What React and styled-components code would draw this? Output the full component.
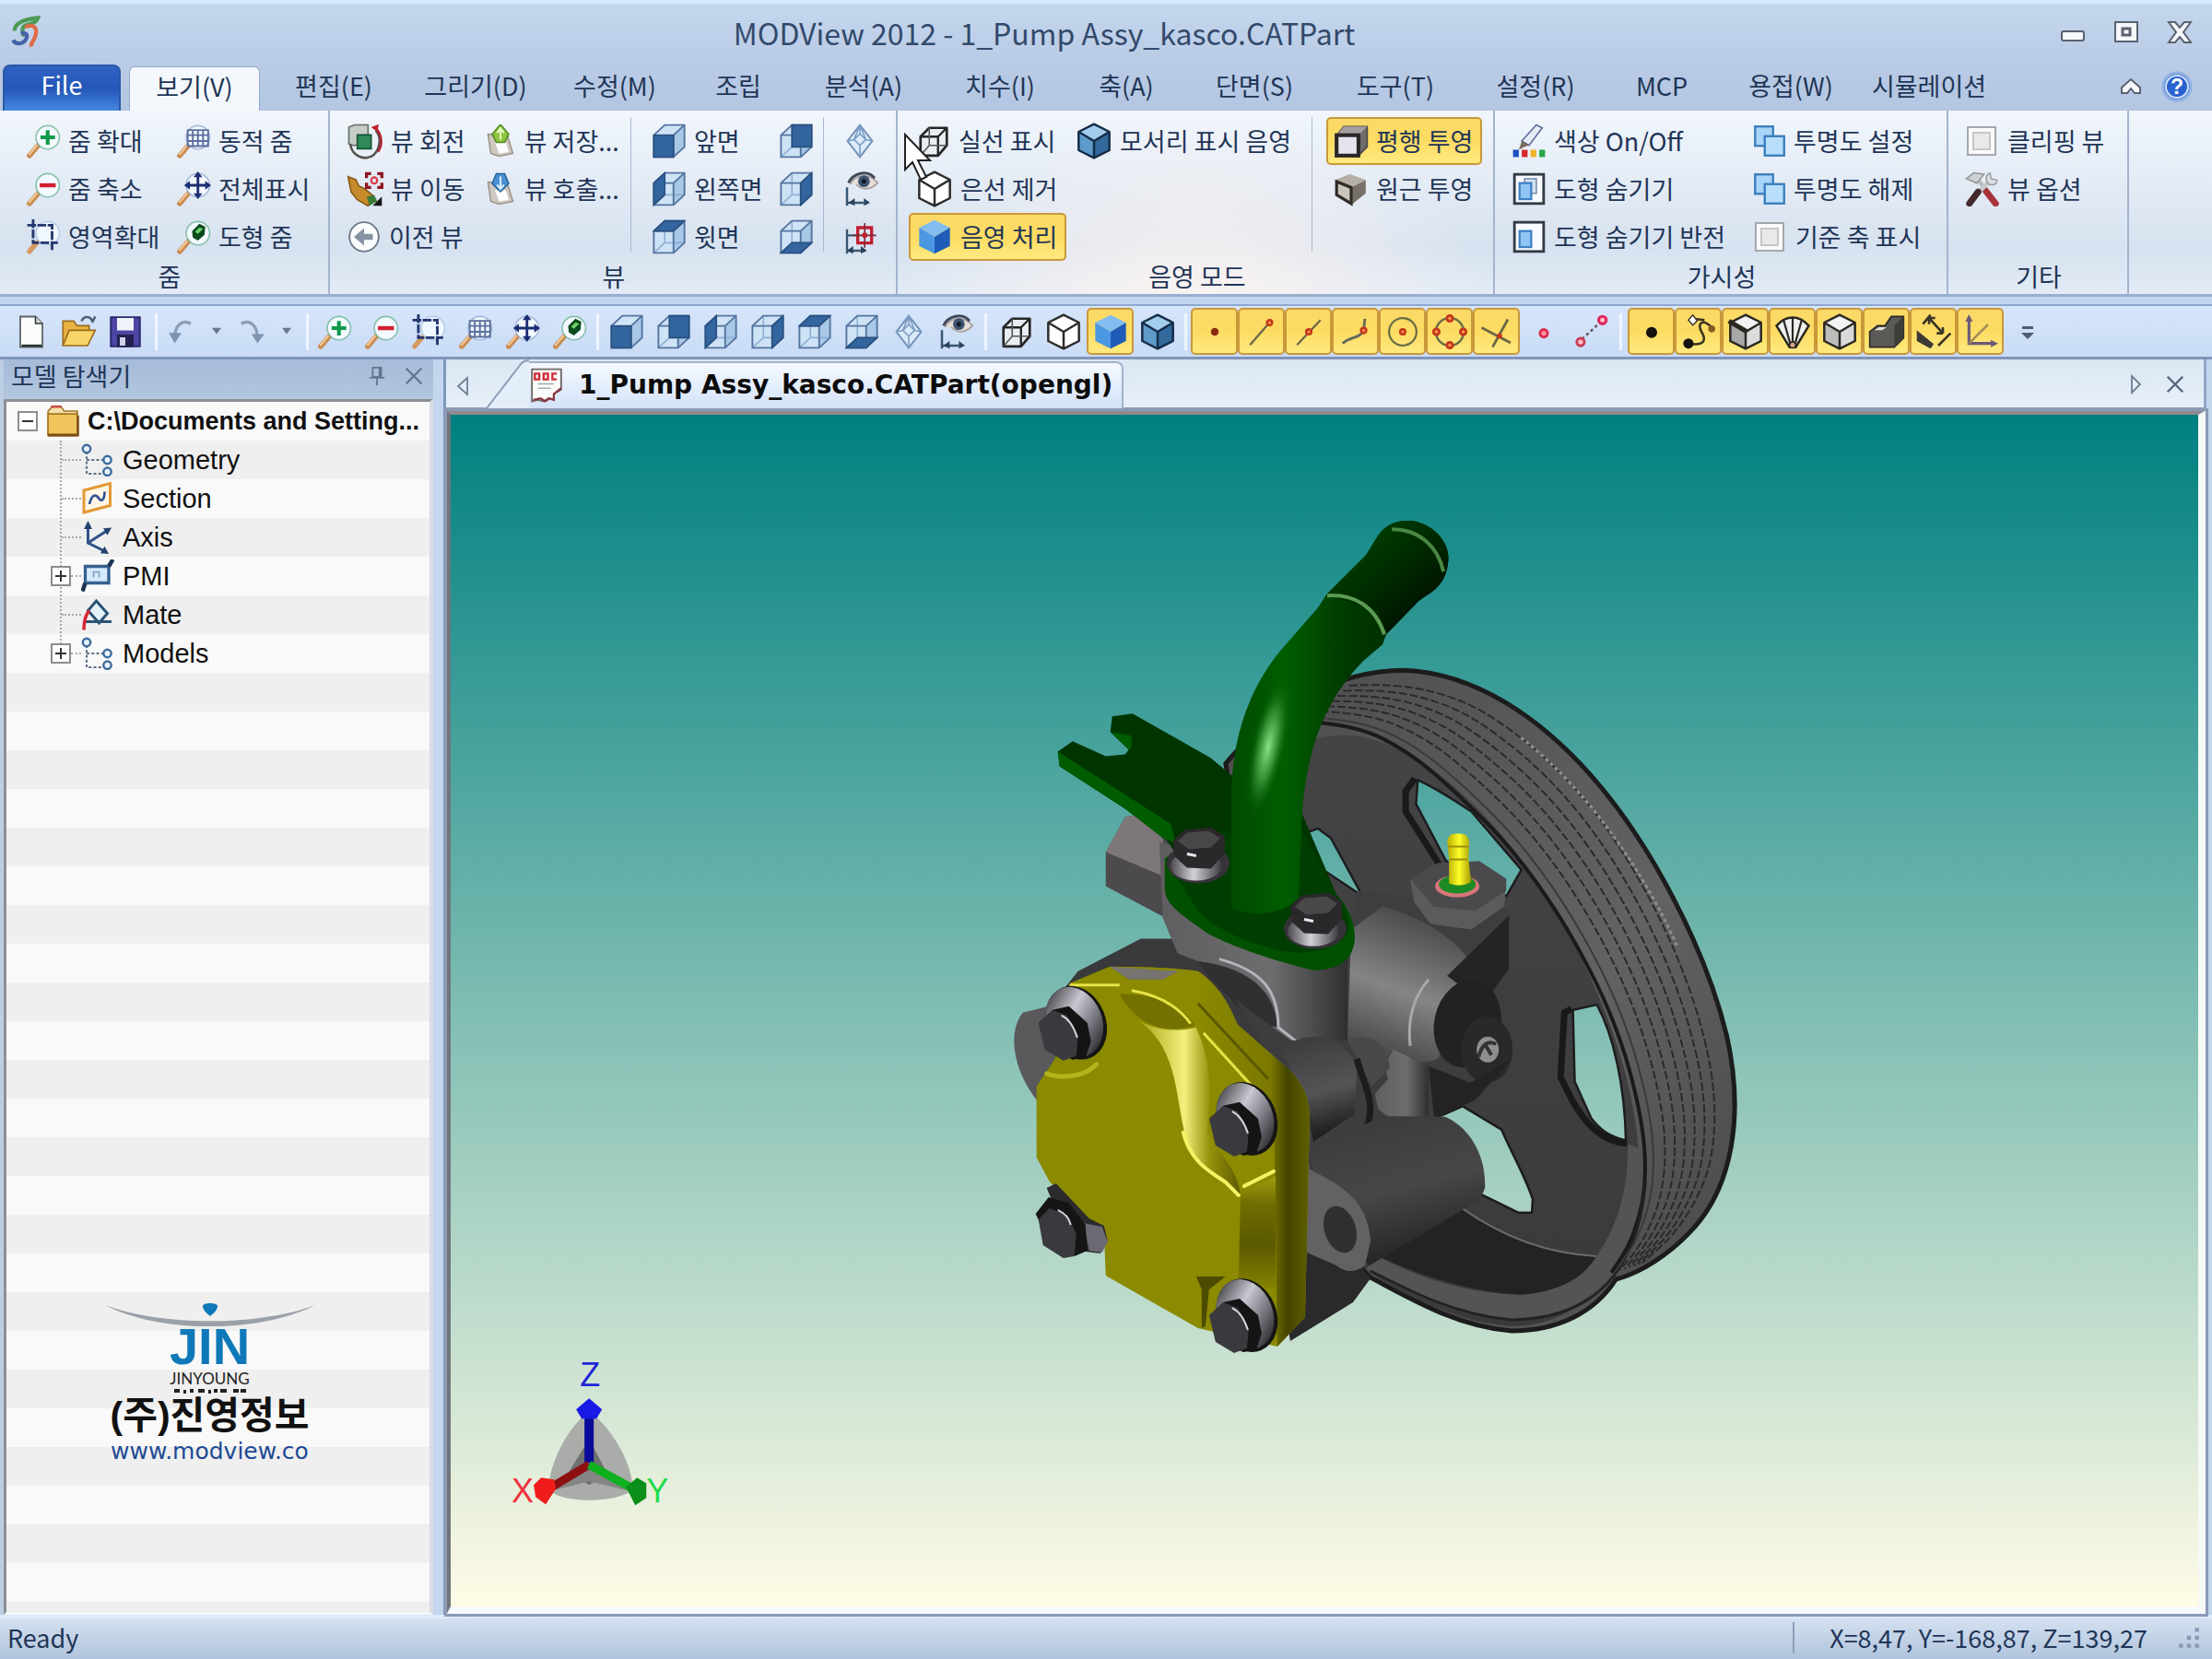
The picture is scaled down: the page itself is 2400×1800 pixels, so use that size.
import React, { useState } from 'react';
import styled, { createGlobalStyle, css } from 'styled-components';

const GlobalStyle = createGlobalStyle`
  * { box-sizing: border-box; }
  body {
    margin: 0;
    background: #c3d6ee;
    color: #1f3556;
    font-family: "Noto Sans CJK KR", "Noto Sans", sans-serif;
    font-size: 27px;
    line-height: 34px;
  }
  button, input { font: inherit; color: inherit; }
  button {
    border: none;
    background: none;
    padding: 0;
    cursor: pointer;
  }
`;

const lit = css`
  border: 2px solid #c9983a;
  border-radius: 5px;
  background: linear-gradient(#fbd968, #fddc62 50%, #ffea80);
`;

const Window = styled.div`
  display: flex;
  flex-direction: column;
  min-height: 100vh;
`;

const TitleBar = styled.header`
  display: grid;
  grid-template-columns: 36px 1fr 160px;
  align-items: center;
  height: 70px;
  padding: 0 20px 4px 10px;
  border-top: 4px solid #d6e8fb;
  background: linear-gradient(#c5d7ee, #b9cbe5);
`;

const Title = styled.h1`
  margin: 0;
  text-align: center;
  font-size: 32px;
  font-weight: 400;
  color: #33496b;
`;

const WindowButtons = styled.div`
  display: flex;
  justify-content: flex-end;
  gap: 28px;
`;

const GlyphButton = styled.button`
  display: flex;
  align-items: center;
  justify-content: center;
`;

const TabBar = styled.nav`
  display: flex;
  align-items: flex-end;
  height: 50px;
  padding: 0 20px 0 3px;
  background: linear-gradient(#b9cbe5, #b3c6e2);
`;

const MenuTab = styled.button`
  height: 48px;
  width: ${p => p.$width}px;
  padding-bottom: 6px;
  white-space: nowrap;
  ${p => p.$active && css`
    border-radius: 6px 6px 0 0;
    border: 1px solid #94aacb;
    border-bottom: none;
    background: #f4f8fd;
  `}
`;

const FileTab = styled.button`
  width: 128px;
  height: 50px;
  margin-right: 9px;
  padding-bottom: 8px;
  border-radius: 8px 8px 0 0;
  border: 2px solid #2a57a8;
  border-bottom: none;
  color: #fff;
  background: linear-gradient(#2f62c4, #2457b8 50%, #4688e2);
`;

const TabBarEnd = styled.div`
  display: flex;
  align-items: center;
  gap: 20px;
  height: 52px;
  margin-left: auto;
`;

const Ribbon = styled.div`
  display: flex;
  height: 202px;
  border-bottom: 3px solid #98afd0;
  background: linear-gradient(#f1f6fc, #e3ebf5 40%, #d7e2f0 75%, #e2ebf6);
`;

const Group = styled.section`
  display: flex;
  flex-direction: column;
  width: ${p => p.$width}px;
  padding: 7px 8px 0 ${p => p.$start}px;
  border-right: 2px solid #a3b4cd;
  ${p => p.$warm && css`
    background: radial-gradient(ellipse at 50% 110%, #fbf3f0, transparent 70%);
  `}
`;

const GroupBody = styled.div`
  display: flex;
  height: 156px;
`;

const GroupTitle = styled.h2`
  margin: 0;
  text-align: center;
  font-size: 27px;
  font-weight: 400;
`;

const Column = styled.div`
  display: flex;
  flex-direction: column;
  align-items: flex-start;
  width: ${p => p.$width ? `${p.$width}px` : 'auto'};
`;

const Rule = styled.div`
  width: 1px;
  height: 146px;
  margin-right: ${p => p.$after}px;
  background: #a9b9d2;
`;

const Command = styled.button`
  display: flex;
  align-items: center;
  gap: 8px;
  height: 52px;
  padding: 0 8px 0 6px;
  border: 2px solid transparent;
  white-space: nowrap;
  svg { flex: none; }
  ${p => p.$on && lit}
`;

const CheckCommand = styled.label`
  display: flex;
  align-items: center;
  gap: 12px;
  height: 52px;
  padding: 0 8px 0 10px;
  white-space: nowrap;
`;

const CheckBox = styled.input`
  appearance: none;
  width: 32px;
  height: 32px;
  margin: 0;
  border: 2px solid #a4a8ae;
  background: #e9e9e9;
  box-shadow: inset 0 0 0 4px #fafafa, inset 0 0 0 6px #c6c6c6;
  &:checked { background: #6d9bd8; }
`;

const ToolBar = styled.div`
  display: flex;
  align-items: center;
  height: 60px;
  margin-top: 8px;
  padding: 0 8px;
  border-top: 2px solid #8ea8cf;
  border-bottom: 3px solid #8096b8;
  background: linear-gradient(#d6e5fa, #c9dbf6);
`;

const ToolButton = styled.button`
  display: flex;
  align-items: center;
  justify-content: center;
  width: ${p => p.$narrow ? 38 : 51}px;
  height: 51px;
  ${p => p.$on && lit}
`;

const ToolRule = styled.div`
  width: 3px;
  height: 40px;
  margin: 0 ${p => p.$space || 4}px;
  background: #eef5ff;
`;

const Workspace = styled.main`
  display: flex;
  flex: 1;
`;

const Explorer = styled.aside`
  display: flex;
  flex-direction: column;
  width: 470px;
  border-left: 4px solid #bccde4;
`;

const ExplorerHead = styled.div`
  display: flex;
  align-items: center;
  gap: 18px;
  height: 43px;
  padding: 0 10px 8px 8px;
  background: linear-gradient(#a6bbd8, #b3c6df);
`;

const ExplorerTitle = styled.h2`
  margin: 0 auto 0 0;
  font-size: 27px;
  font-weight: 400;
`;

const TreePanel = styled.div`
  display: flex;
  flex-direction: column;
  align-items: center;
  flex: 1;
  border: 3px solid #8b8f96;
  border-right: 4px solid #d8dde4;
  border-bottom-color: #f4f6f8;
  background: repeating-linear-gradient(#f9f9f9 0 42px, #efefef 42px 84px);
`;

const Tree = styled.ul`
  width: 100%;
  margin: 0;
  padding: 0;
  list-style: none;
  font-family: "Liberation Sans", Arial, sans-serif;
  color: #101010;
`;

const Root = styled.div`
  display: flex;
  align-items: center;
  gap: 8px;
  height: 42px;
  padding-left: 12px;
  font-size: 27px;
  font-weight: 700;
  white-space: nowrap;
`;

const Branch = styled.ul`
  margin: 0 0 0 58px;
  padding: 0;
  list-style: none;
  border-left: 2px dotted #a8a8a8;
  height: ${p => p.$count * 42 - 20}px;
`;

const Leaf = styled.li`
  display: flex;
  align-items: center;
  height: 42px;
  font-size: 29px;
  svg { margin-right: 9px; }
`;

const Twig = styled.span`
  width: ${p => p.$short ? 11 : 21}px;
  border-top: 2px dotted #a8a8a8;
`;

const Expander = styled.button`
  width: 22px;
  height: 22px;
  flex: none;
  margin-left: ${p => p.$nested ? -12 : 0}px;
  border: 2px solid #8c8c8c;
  background:
    linear-gradient(#333, #333) center / 12px 2px no-repeat,
    linear-gradient(#333, #333) center / 2px ${p => p.$open ? 0 : 12}px no-repeat,
    #fff;
`;

const Company = styled.div`
  display: flex;
  flex-direction: column;
  align-items: center;
  width: 100%;
  margin: auto 0 160px;
  padding-right: 18px;
`;

const CompanyMark = styled.div`
  font-family: "Liberation Sans", Arial, sans-serif;
  font-size: 56px;
  font-weight: 700;
  line-height: 44px;
  color: #0f78b8;
`;

const CompanySub = styled.div`
  margin-top: 4px;
  font-family: "Lato", sans-serif;
  font-size: 17px;
  line-height: 17px;
  color: #222;
`;

const CompanyName = styled.div`
  font-family: "Liberation Sans", "Noto Sans CJK KR", sans-serif;
  font-size: 41px;
  font-weight: 700;
  line-height: 47px;
  color: #111;
  white-space: nowrap;
`;

const CompanyLink = styled.a`
  font-family: "DejaVu Sans", sans-serif;
  font-size: 25px;
  line-height: 29px;
  color: #1d4a94;
  text-decoration: none;
`;

const Documents = styled.section`
  display: flex;
  flex-direction: column;
  flex: 1;
  margin-left: 11px;
  border-left: 3px solid #7f97bd;
`;

const DocBar = styled.div`
  display: flex;
  align-items: flex-end;
  height: 55px;
  padding-right: 20px;
  border-right: 3px solid #90a6c6;
  margin-right: 6px;
  background: linear-gradient(#dbe6f3, #e8f1fa);
  box-shadow: inset 0 -3px #8b9db8;
`;

const DocScroll = styled(GlyphButton)`
  width: 36px;
  height: 52px;
`;

const DocSlant = styled.svg`
  flex: none;
  margin-bottom: 2px;
`;

const DocTab = styled.div`
  display: flex;
  align-items: center;
  gap: 16px;
  height: 53px;
  padding: 0 10px 4px 0;
  border-top: 2px solid #9fb2cd;
  border-right: 2px solid #9fb2cd;
  border-radius: 0 8px 0 0;
  background: linear-gradient(#f4f9ff, #d3e2f8);
  font-family: "DejaVu Sans", sans-serif;
  font-size: 28px;
  font-weight: 700;
  color: #0c0c0c;
`;

const DocBarEnd = styled.div`
  display: flex;
  align-items: center;
  gap: 20px;
  height: 52px;
  padding-bottom: 4px;
  margin-left: auto;
`;

const Viewport = styled.div`
  position: relative;
  flex: 1;
  margin-right: 6px;
  border-style: solid;
  border-width: 5px 9px 9px 5px;
  border-color: #8f8a90 #f6f8f6 #f7fafd #70757c;
  outline: 3px solid #8b9bb6;
  outline-offset: -1px;
  background: linear-gradient(#008080, #fffbe6);
`;

const Scene = styled.svg`
  position: absolute;
  inset: 0;
  width: 100%;
  height: 100%;
`;

const StatusBar = styled.footer`
  display: flex;
  align-items: center;
  height: 48px;
  padding: 0 12px 2px 8px;
  border-top: 4px solid #dcebfa;
  background: linear-gradient(#d3e0f0, #b1c4dd);
`;

const Coordinates = styled.div`
  display: flex;
  align-items: center;
  gap: 32px;
  margin-left: auto;
  padding-left: 38px;
  border-left: 2px solid #8c9db8;
`;

const Pointer = styled.svg`
  position: absolute;
  left: 980px;
  top: 144px;
  pointer-events: none;
`;

/* ---------- icons ---------- */

function Icon({ children, size = 38 }) {
  return (
    <svg width={size} height={size} viewBox="0 0 24 24" fill="none" aria-hidden="true">
      {children}
    </svg>
  );
}

const FACES = {
  front: '1.5,8 15,8 15,23 1.5,23',
  back: '9,1 22.5,1 22.5,16 9,16',
  left: '1.5,8 9,1 9,16 1.5,23',
  right: '15,8 22.5,1 22.5,16 15,23',
  top: '1.5,8 9,1 22.5,1 15,8',
  bottom: '1.5,23 9,16 22.5,16 15,23',
};

function FaceCube({ face }) {
  return (
    <Icon>
      <polygon points="1.5,8 9,1 22.5,1 22.5,16 15,23 1.5,23" fill="#cfe3f6" />
      <polygon points={FACES.right} fill="#a9c8e8" />
      {face !== 'front' && <path d="M9 1v15h13.5M9 16l-7.500 7" stroke="#8fb0d4" strokeWidth="1" />}
      <path d="M1.500 8L9 1h13.500v15L15 23H1.500zM1.500 8H15v15M15 8l7.500-7" stroke="#54759f" strokeWidth="1.200" />
      <polygon points={FACES[face]} fill="#33659f" stroke="#28507f" />
    </Icon>
  );
}

function Lens({ tint = '#5fae8c', children }) {
  return (
    <Icon>
      <path d="M2.500 22l6-7" stroke="#c98d52" strokeWidth="3.600" strokeLinecap="round" />
      <path d="M2.500 21l5-6" stroke="#f3c596" strokeWidth="1.400" strokeLinecap="round" />
      <circle cx="15" cy="9.500" r="8" fill="#f3f9ff" stroke={tint} strokeWidth="1" strokeOpacity="0.700" />
      {children}
    </Icon>
  );
}

const ZoomIn = () => <Lens><path d="M15 4.500v10M10 9.500h10" stroke="#0e9a4a" strokeWidth="2.600" /></Lens>;
const ZoomOut = () => <Lens><path d="M9.500 9.500h11" stroke="#d3202f" strokeWidth="2.800" /></Lens>;
const ZoomDynamic = () => (
  <Lens tint="#8ca3cc">
    <path d="M8 4.500h14v11H8zM8 8h14M8 12h14M11.500 4.500v11M15 4.500v11M18.500 4.500v11" stroke="#5b6f9f" strokeWidth="1.200" />
  </Lens>
);
const ZoomFit = () => (
  <Lens tint="#8ca3cc">
    <path d="M15 2v15M7.500 9.500h15" stroke="#1c2f74" strokeWidth="1.800" />
    <path d="M15 0l3 4h-6zM15 19l3-4h-6zM5.500 9.500l4-3v6zM24 9.500l-4-3v6z" fill="#1c2f74" />
  </Lens>
);
const ZoomShape = () => (
  <Lens>
    <path d="M11 8l5-5 4 2-.5 5.500-4.500 4-3.500-2z" fill="#0b4a1d" />
    <path d="M13 8.500l3-3 2.500 1-3.500 3.500z" fill="#6fd06a" />
  </Lens>
);
const ZoomArea = () => (
  <Icon>
    <circle cx="15" cy="9.500" r="8" fill="#eff7ff" stroke="#b9cde8" />
    <path d="M2.500 22l5-6" stroke="#d39a62" strokeWidth="3.400" strokeLinecap="round" />
    <path d="M5 0v16h17M1 4h17v17" stroke="#24366f" strokeWidth="1.800" strokeDasharray="6 1" />
  </Icon>
);

const RotateView = () => (
  <Icon size={40}>
    <path d="M1.500 3L5 1.500h9V13l-9 2-3.500-1z" fill="#c8ccc6" stroke="#64706a" />
    <path d="M7 8h9v9H7z" fill="#2f8a58" stroke="#125334" />
    <path d="M19 5c5 6 2 17-6 18-6 0-10-4-10.500-9" stroke="#57514f" strokeWidth="1.500" />
    <path d="M18.500 3c5 5 5 12 2 16" stroke="#b3212f" strokeWidth="1.500" />
    <path d="M16 3l5-2-1 5z" fill="#c2202e" />
  </Icon>
);
const MoveView = () => (
  <Icon size={40}>
    <path d="M1 4l5 2 2 4 4 2 6 5-4 6-7-4-4-5-1-5z" fill="#c88b2c" stroke="#8a5b18" />
    <path d="M13 17l5-1 2 4-5 3z" fill="#3b7a35" />
    <path d="M13 5V2h3M20 2h3v3M23 8v3h-3M16 11h-3V8" stroke="#8e1420" strokeWidth="2" />
    <circle cx="18" cy="6.500" r="2" stroke="#d8404a" strokeWidth="1.400" />
    <path d="M23 17v6h-6z" fill="#161616" />
  </Icon>
);
const BackView = () => (
  <Icon>
    <circle cx="12" cy="12" r="10" fill="#fbfcfe" stroke="#6e7988" strokeWidth="1.200" />
    <path d="M5 12l7-6v4h6v4h-6v4z" fill="#8793a4" />
  </Icon>
);
function Stamp({ color, edge, up }) {
  return (
    <Icon size={36}>
      <path d="M3 7l14 1 4 13-10 2-6-2z" fill="#cfc8c1" stroke="#9d9389" />
      <path d="M8 13l8 0 2 7-7 1z" fill="#fff" />
      {up
        ? <path d="M12 0l6 7-3 6H9L6 7z" fill={color} stroke={edge} />
        : <path d="M12 14L6 8l3-7h6l3 7z" fill={color} stroke={edge} />}
      {up
        ? <path d="M12 2v9M9.500 6L12 3l2.500 3" stroke="#e4f6c4" strokeWidth="1.400" />
        : <path d="M12 3v9M9.500 9l2.500 3 2.500-3" stroke="#d4eafc" strokeWidth="1.400" />}
    </Icon>
  );
}
const Diamond = () => (
  <Icon>
    <path d="M12 1l8.500 11L12 23 3.500 12z" fill="#dcebf9" stroke="#6f8fb8" strokeWidth="1.200" />
    <path d="M12 1v6M12 23v-8M12 7l-4 4 4 4 4-4zM8 11l-4.500 1M16 11l4.500 1M12 1L8 11M12 1l4 10" stroke="#7d9cc2" />
  </Icon>
);
const EyeAxis = () => (
  <Icon size={40}>
    <path d="M5 9c3-6 12-8 18-1-5 5-10 5-14 1" fill="#e4ddd8" stroke="#a79c98" />
    <path d="M4 8c3-6 12-9 17-3" stroke="#3f4b59" strokeWidth="1.800" />
    <circle cx="14" cy="7" r="3.800" fill="#3d5370" />
    <circle cx="14" cy="7" r="1.500" fill="#101820" />
    <path d="M3 11v12M3 21h11" stroke="#3a5672" strokeWidth="1.500" />
    <path d="M14 23l4-2-4-3zM8 23l-4-2 4-3z" fill="#27435f" />
  </Icon>
);
const TargetAxis = () => (
  <Icon size={40}>
    <path d="M3 7v16M3 21h10M3 11h8" stroke="#3a5672" strokeWidth="1.400" />
    <path d="M12 23l4-2-4-3zM7 23l-4-2 4-3z" fill="#27435f" />
    <path d="M10 6h9v10h-9z" stroke="#c01f30" strokeWidth="2" />
    <path d="M14.500 3v16M7 11h15" stroke="#7a2a38" />
    <circle cx="14.500" cy="11" r="1.800" fill="#c01f30" />
  </Icon>
);
const WireCube = () => (
  <Icon>
    <path d="M3 9l6-6h12v12l-6 7H3z" fill="#e9eef5" stroke="#262626" strokeWidth="1.700" strokeLinejoin="round" />
    <path d="M3 9h12v13M15 9l6-6" stroke="#262626" strokeWidth="1.500" />
    <path d="M9 3v12h12M9 15l-6 7" stroke="#555" />
  </Icon>
);
function HexCube({ top, left, right, line, width = 1.500 }) {
  return (
    <Icon size={40}>
      <path d="M12 1l10 5-10 6L2 6z" fill={top} />
      <path d="M2 6l10 6v11L2 18z" fill={left} />
      <path d="M22 6l-10 6v11l10-5z" fill={right} />
      {line && (
        <path d="M12 1l10 5v12l-10 5-10-5V6zM2 6l10 6 10-6M12 12v11" stroke={line} strokeWidth={width} strokeLinejoin="round" />
      )}
    </Icon>
  );
}
const HiddenCube = () => <HexCube top="#fff" left="#fff" right="#fff" line="#2c2c2c" />;
const ShadedCube = () => <HexCube top="#82bdf0" left="#4c97e2" right="#1f5cb8" />;
const EdgeCube = () => <HexCube top="#a2cdec" left="#5e9bcb" right="#33699c" line="#152c48" />;
const SolidCube = () => <HexCube top="#f3f3f3" left="#bdbdbd" right="#d9d9d9" line="#2b2822" />;
const PickFace = () => (
  <Icon size={40}>
    <path d="M12 1l10 5-10 6L2 6z" fill="#f3f3f3" />
    <path d="M2 6l10 6v11L2 18z" fill="#a8a8a8" />
    <path d="M22 6l-10 6v11l10-5z" fill="#dcdcdc" />
    <path d="M12 1l10 5v12l-10 5-10-5V6zM2 6l10 6 10-6M12 12v11" stroke="#2b2822" strokeWidth="1.500" />
    <path d="M1 5l12 7" stroke="#2b2822" strokeWidth="3" />
  </Icon>
);

const ParallelIcon = () => (
  <Icon>
    <path d="M2 8l5-6h16v14l-6 6z" fill="#6f6c6c" stroke="#4a4748" />
    <path d="M2 8l5-6h16l-6 6z" fill="#a39f9f" />
    <rect x="2" y="8" width="15" height="14" fill="#e6e3ee" stroke="#2a2728" strokeWidth="2.600" />
  </Icon>
);
const PerspectiveIcon = () => (
  <Icon>
    <path d="M1 6l10-4 11 4v9l-10 8z" fill="#77716a" />
    <path d="M1 6l10-4 11 4-10 5z" fill="#b5afa8" />
    <path d="M2 7l10 4v11l-10-6z" fill="#c9c4bc" stroke="#2e2a26" strokeWidth="2" />
  </Icon>
);
const ColorIcon = () => (
  <Icon>
    <path d="M7 12L17 1l4 2-9 12z" fill="#e6ebf5" stroke="#5d6e9a" />
    <path d="M7 12l5 3-3 1-4 2z" fill="#7a6a60" />
    <path d="M1 18h4v5H1z" fill="#1d4fc4" />
    <path d="M7 18h4v5H7z" fill="#d9262f" />
    <path d="M13 18h4v5h-4z" fill="#f0b429" />
    <path d="M19 18h4v5h-4z" fill="#27a84a" />
  </Icon>
);
function HideIcon({ twin }) {
  return (
    <Icon>
      <rect x="2" y="2" width="20" height="20" fill="#f8fbff" stroke="#343b45" strokeWidth="1.800" />
      {twin && <rect x="9" y="5" width="8" height="10" fill="#d7e3f0" stroke="#7b8ea8" />}
      <rect x="5.500" y="8" width="8" height="11" fill="#8ec5f5" stroke="#3d7fc4" strokeWidth="1.400" />
    </Icon>
  );
}
const LayersIcon = () => (
  <Icon size={36}>
    <rect x="1.500" y="1.500" width="13" height="14" fill="#a9d4f8" stroke="#3c7fbd" strokeWidth="1.600" />
    <rect x="8.500" y="8.500" width="14" height="14" fill="#b9defc" stroke="#3c7fbd" strokeWidth="1.600" />
  </Icon>
);
const OptionsIcon = () => (
  <Icon>
    <path d="M6 2l14 18" stroke="#b9bcc0" strokeWidth="3" />
    <path d="M14 13l7 9" stroke="#a8323c" strokeWidth="4.400" strokeLinecap="round" />
    <path d="M18 5L9 15" stroke="#c7c9cc" strokeWidth="3" />
    <path d="M9 14l-6 8" stroke="#43282c" strokeWidth="4.400" strokeLinecap="round" />
    <path d="M1 5l5-4 7 1-5 6z" fill="#cfd2d5" stroke="#93969a" />
    <path d="M17 1l1 4 4 1c0 4-6 4-7 1s0-5 2-6z" fill="#dcdfe2" stroke="#989b9f" />
  </Icon>
);

const NewIcon = () => (
  <Icon size={36}>
    <path d="M4 1h11l5 5v17H4z" fill="#fbfdfd" stroke="#5b6663" strokeWidth="1.200" />
    <path d="M15 1v5h5" fill="#cfd8d6" stroke="#2b3836" />
    <path d="M5 22h14.500" stroke="#26322f" strokeWidth="1.600" />
  </Icon>
);
const OpenIcon = () => (
  <Icon size={40}>
    <path d="M2 21V5h7l2 3h8v5" fill="#e9b243" stroke="#9b6c1c" />
    <path d="M2 21l4-10h17l-5 10z" fill="#f9d469" stroke="#9b6c1c" />
    <path d="M14 5c2-4 6-3 7 0M21 6l2-4" stroke="#4b6076" strokeWidth="1.500" />
  </Icon>
);
const SaveIcon = () => (
  <Icon size={36}>
    <path d="M1.500 1.500h21v21h-21z" fill="#4d46a4" stroke="#2b2769" strokeWidth="1.300" />
    <rect x="6" y="2" width="12" height="9" fill="#f1f3fb" />
    <rect x="6" y="14" width="12" height="9" fill="#23214f" />
    <rect x="8" y="16" width="4" height="6" fill="#cfd3ea" />
  </Icon>
);
const UndoIcon = () => (
  <Icon size={30}>
    <path d="M20 5C13 1 7 6 6 15" stroke="#8b9db6" strokeWidth="2.600" />
    <path d="M1 13h11l-6 9z" fill="#7e93ad" />
  </Icon>
);
const RedoIcon = () => (
  <Icon size={30}>
    <path d="M3 5c7-4 13 1 14 10" stroke="#8b9db6" strokeWidth="2.600" />
    <path d="M12 14h11l-6 8z" fill="#7e93ad" />
  </Icon>
);
const DropIcon = () => <Icon size={20}><path d="M6 7h12l-6 8z" fill="#66768c" /></Icon>;

function Dot({ x, y, color = '#c5381b', r = 2 }) {
  return <circle cx={x} cy={y} r={r} fill="#f59a4a" stroke={color} strokeWidth="1.800" />;
}
const SnapPoint = () => <Icon size={34}><circle cx="12" cy="12" r="3" fill="#8a2c12" /></Icon>;
const SnapEnd = () => <Icon size={34}><path d="M3 22L17 6" stroke="#6b6648" strokeWidth="1.600" /><Dot x={18} y={5} /></Icon>;
const SnapMid = () => <Icon size={34}><path d="M3 22L21 3" stroke="#6b6648" strokeWidth="1.600" /><Dot x={12} y={12} /></Icon>;
const SnapCurve = () => <Icon size={34}><path d="M2 21c4-5 14-4 16-10l1-9" stroke="#666a5c" strokeWidth="2" /><Dot x={18} y={11} /></Icon>;
const SnapCenter = () => <Icon size={34}><circle cx="12" cy="12" r="10.500" stroke="#6a7048" strokeWidth="1.600" /><Dot x={12} y={12} /></Icon>;
const SnapQuad = () => (
  <Icon>
    <circle cx="12" cy="12" r="9.500" stroke="#6a7048" strokeWidth="1.600" />
    <Dot x={12} y={2.800} /><Dot x={12} y={21.200} /><Dot x={2.800} y={12} /><Dot x={21.200} y={12} />
  </Icon>
);
const SnapCross = () => (
  <Icon size={36}><path d="M1 9l21 11M20 3L9 23" stroke="#6a6646" strokeWidth="1.800" /><Dot x={14} y={15} r={1} /></Icon>
);
const SnapFree = () => <Icon><circle cx="12" cy="13" r="2.600" fill="#ff8f9a" stroke="#d92b4c" strokeWidth="1.800" /></Icon>;
const SnapDistance = () => (
  <Icon>
    <path d="M6 17L18 6" stroke="#6b5560" strokeWidth="1.600" strokeDasharray="2 2" />
    <circle cx="5" cy="19" r="2.600" fill="#ffc0c8" stroke="#c93a55" strokeWidth="1.800" />
    <circle cx="20" cy="4" r="2.600" fill="#ffc0c8" stroke="#e0265c" strokeWidth="2" />
  </Icon>
);
const PickPoint = () => <Icon><circle cx="12" cy="12.500" r="3.800" fill="#151310" /></Icon>;
const PickCurve = () => (
  <Icon>
    <path d="M5 20c12 2 12-3 9-8s0-10 7-3M8 3l8 1" stroke="#3a3420" strokeWidth="1.600" />
    <circle cx="5" cy="20" r="3.500" fill="#151310" />
    <path d="M8 .5l3 4-3 3-3-3.500z" fill="#fff" stroke="#4a4330" />
    <circle cx="21" cy="10" r="2.400" fill="#8a5a22" />
  </Icon>
);
const PickFan = () => (
  <Icon size={40}>
    <path d="M1.500 8C8 1 16 1 22.500 8L14 22h-4z" fill="#efefef" stroke="#2b2822" strokeWidth="1.500" />
    <path d="M6 4l4.500 16M12 3v17M18 4l-4.500 16" stroke="#2b2822" strokeWidth="1.300" />
    <circle cx="12" cy="20.500" r="2" fill="#d8a78c" stroke="#2b2822" />
  </Icon>
);
const PickBody = () => (
  <Icon size={40}>
    <path d="M1 22V12l5-4h5l4-6h8v14l-6 6z" fill="#5c5a56" stroke="#2c2a27" />
    <path d="M17 22V8l6-6v14z" fill="#3f3d3a" />
    <path d="M4 11l3-2h5l-3 2z" fill="#e3e0da" />
  </Icon>
);
const PickMeasure = () => (
  <Icon size={40}>
    <path d="M1 11l11 9-2 3-9-5z" fill="#3d3a36" />
    <path d="M9 3l9 10M5 7l5-6M15 21l8-8M9 3v4M9 3h4M18 13h-4M18 13V9" stroke="#3a3426" strokeWidth="1.600" />
  </Icon>
);
const PickAxis = () => (
  <Icon>
    <path d="M4 2v18h18" stroke="#6d5a78" strokeWidth="2" />
    <path d="M4 20L17 7" stroke="#a48a5c" strokeWidth="1.600" />
    <path d="M4 0L1.500 5h5zM24 20l-5-2.500v5z" fill="#6d5a78" />
  </Icon>
);

const GraphIcon = () => (
  <Icon size={36}>
    <path d="M4 6v16h12M4 12h12" stroke="#5f6f86" strokeWidth="1.400" strokeDasharray="2 1.500" />
    <circle cx="4" cy="4" r="2.800" fill="#e8f3fd" stroke="#3c6c9c" strokeWidth="1.600" />
    <circle cx="19" cy="12" r="2.800" fill="#e8f3fd" stroke="#3c6c9c" strokeWidth="1.600" />
    <circle cx="19" cy="20.500" r="2.800" fill="#e8f3fd" stroke="#3c6c9c" strokeWidth="1.600" />
  </Icon>
);
const SectionIcon = () => (
  <Icon size={36}>
    <path d="M2 6l19-5v16L2 22z" fill="#fff6e4" stroke="#e29a35" strokeWidth="2" />
    <path d="M6 16c2-8 5-7 7-4s4 0 4-5" stroke="#34529a" strokeWidth="1.800" />
  </Icon>
);
const AxisIcon = () => (
  <Icon size={36}>
    <path d="M5 2v14l12 6M5 16L19 7" stroke="#2f5287" strokeWidth="2" />
    <path d="M5 0L2 6h6zM22 5l-6 .5 3 5zM20 24l-6-.5 3-5z" fill="#25436f" />
  </Icon>
);
const PmiIcon = () => (
  <Icon size={36}>
    <path d="M3 5h17v12H3z" fill="#d5eafa" stroke="#35608f" strokeWidth="2.200" />
    <path d="M3 17l-2 6M20 5l3-5" stroke="#1d3350" strokeWidth="3" />
    <path d="M9 13v-4h4v4" stroke="#7d9cc0" />
  </Icon>
);
const MateIcon = () => (
  <Icon size={36}>
    <path d="M5 9l6-7 8 9-6 7z" fill="#e4f3fa" stroke="#2a5374" strokeWidth="2" />
    <path d="M2 17h20" stroke="#2a5374" strokeWidth="2" />
    <path d="M2 23c0-8 2-12 4-14" stroke="#d42836" strokeWidth="2.400" />
  </Icon>
);
const FolderIcon = () => (
  <Icon size={38}>
    <path d="M2 5l3-3h6l2 3h9v17H2z" fill="#f3dfa8" stroke="#a87624" />
    <path d="M2 7h20v14H2z" fill="#f0c55c" stroke="#a87624" />
    <path d="M2 21.500h20.500V8" stroke="#7c4d18" strokeWidth="1.500" />
    <path d="M4 2h7" stroke="#c94848" strokeWidth="1.600" />
  </Icon>
);
const DocIcon = () => (
  <svg width="38" height="40" viewBox="0 0 24 24" fill="none" aria-hidden="true">
    <path d="M2 1h20v14l-5 3v4l-4-1-3 2-4-1-4 1z" fill="#fbfbfa" stroke="#6f6a66" strokeWidth="1.200" />
    <path d="M4 4h3v4H4zM10 4h3v4h-3zM19 4h-3v4h3" stroke="#d12a35" strokeWidth="1.500" />
    <path d="M6 11h11M6 14h9" stroke="#9db0a8" />
    <path d="M3 22l5-1 3 2 3-2 3 1v-4l5-4" stroke="#8b3440" strokeWidth="1.400" />
  </svg>
);
const AppLogo = () => (
  <svg width="34" height="38" viewBox="0 0 24 24" fill="none" aria-hidden="true">
    <path d="M4 11c0-6 8-9 18-10-2 5-6 4-10 6-4 2 0 5-2 8" stroke="#4d9b55" strokeWidth="3" />
    <path d="M3 18c2 4 8 3 10-1s-2-5-4-4" stroke="#4561a8" strokeWidth="3" />
    <path d="M12 8c7-3 10 1 8 7s-4 5-3 8" stroke="#e06a44" strokeWidth="3" />
  </svg>
);

/* ---------- 3D scene ---------- */

function SideBolt({ x, y }) {
  return (
    <g transform={`translate(${x} ${y})`}>
      <ellipse cx="10" cy="-4" rx="32" ry="41" transform="rotate(-22 10 -4)" fill="#151515" />
      <ellipse cx="8" cy="-5" rx="30" ry="39" transform="rotate(-22 8 -5)" fill="url(#washer)" />
      <path d="M-16-18L2-22 22-4 26 16 20 34 6 36-22 22z" fill="#141414" />
      <path d="M-31-4l15-14 16 6 12 22-2 22-14 5-20-12z" fill="#3a3a3e" />
      <path d="M-6-12C2-8 8 2 11 12" stroke="#d5d5dc" strokeWidth="2" fill="none" />
    </g>
  );
}

function TopBolt({ x, y }) {
  return (
    <g transform={`translate(${x} ${y})`}>
      <ellipse cx="0" cy="8" rx="34" ry="22" fill="#353338" />
      <ellipse cx="-2" cy="11" rx="28" ry="16" fill="url(#washerTop)" />
      <path d="M-27-16l12-12 30-3 14 10v18L14 14l-26-1-13-12z" fill="#2a282b" />
      <path d="M-22-16l10-9 24-2 12 8-10 10-24 2z" fill="#4a474b" />
      <path d="M-12-2l10 2" stroke="#e8e8ee" strokeWidth="3" />
    </g>
  );
}

/* belt grooves run between the rear and the front edge of the rim */
const REAR = [[1472, 738], [1523, 734], [1597, 749], [1650, 779], [1700, 820], [1750, 876], [1798, 952], [1838, 1036], [1864, 1116], [1875, 1180], [1873, 1241], [1860, 1285], [1828, 1336], [1788, 1369]];
const FRONT = [[1420, 785], [1470, 788], [1530, 818], [1585, 866], [1640, 922], [1690, 991], [1733, 1068], [1760, 1134], [1776, 1194], [1784, 1240], [1785, 1284], [1779, 1320], [1766, 1355], [1748, 1382]];

const HOLES = `
  M1537 846C1560 856 1580 870 1597 881L1652 945 1635 975 1590 960 1567 935 1535 874z
  M1705 1096L1733 1090C1752 1125 1764 1180 1765 1240 1745 1236 1735 1228 1725 1215L1707 1175z
  M1560 1212L1587 1200 1630 1226C1640 1250 1655 1275 1664 1302L1663 1318 1647 1318 1600 1295z
  M1417 904L1430 899 1445 910 1482 978 1472 971 1433 945z`;

function smooth(points) {
  let d = `M${points[0][0]} ${points[0][1]}`;
  for (let i = 1; i < points.length - 1; i++) {
    const [x, y] = points[i];
    const [nx, ny] = points[i + 1];
    d += ` Q${x} ${y} ${(x + nx) / 2} ${(y + ny) / 2}`;
  }
  const last = points[points.length - 1];
  return `${d} L${last[0]} ${last[1]}`;
}

function groove(t) {
  return smooth(REAR.map(([x, y], i) => [x + (FRONT[i][0] - x) * t, y + (FRONT[i][1] - y) * t]));
}

function Pulley() {
  return (
    <g>
      <path
        fillRule="evenodd"
        fill="url(#rim)"
        stroke="#1c1c1d"
        strokeWidth="5"
        d={`M1330 830C1380 770 1450 729 1523 729 1600 732 1670 780 1725 842 1790 915 1850 1030 1873 1125 1892 1210 1880 1290 1833 1338 1810 1362 1780 1382 1753 1389 1730 1425 1690 1445 1640 1445 1580 1440 1530 1410 1487 1387L1400 1300z ${HOLES}`}
      />
      <path
        fillRule="evenodd"
        fill="url(#disc)"
        d={`M1350 870C1380 820 1420 795 1470 800 1560 812 1650 920 1700 1010 1745 1095 1775 1180 1778 1260 1778 1370 1720 1440 1640 1440 1580 1436 1530 1408 1487 1383L1400 1300z ${HOLES}`}
      />
      <path d="M1535 846l-10 14v22l38 60 10 4M1705 1096l-8 4-4 70 12 24c14 26 34 46 60 48" fill="none" stroke="#19191a" strokeWidth="7" />
      <path d="M1586 1312C1640 1350 1690 1362 1732 1364 1716 1390 1690 1404 1650 1406 1590 1402 1540 1384 1495 1364z" fill="#232324" />
      <path d="M1586 1312C1640 1350 1690 1362 1732 1364" fill="none" stroke="#6a6a6c" strokeWidth="2" />
      <path d="M1495 1364C1540 1388 1590 1404 1650 1406 1690 1402 1716 1390 1732 1364 1756 1330 1766 1290 1766 1242L1783 1250C1784 1370 1730 1432 1640 1433 1580 1430 1530 1405 1482 1378z" fill="#545456" />
      <path d={smooth(FRONT)} fill="none" stroke="#1a1a1b" strokeWidth="4" />
      <path d="M1785 1284C1776 1390 1720 1432 1640 1433 1580 1428 1530 1402 1487 1380" fill="none" stroke="#222" strokeWidth="3" />
      {[0.16, 0.28, 0.4, 0.52, 0.64, 0.76].map(t => (
        <path key={t} d={groove(t)} fill="none" stroke="#2a2a2b" strokeWidth="2" strokeDasharray="9 3" />
      ))}
      <path d={groove(0.9)} fill="none" stroke="#3a3a3c" strokeWidth="2" />
      <path d="M1650 802C1720 856 1786 950 1820 1030" fill="none" stroke="#8d8d90" strokeWidth="3" strokeDasharray="4 3" />
    </g>
  );
}

function PumpBody() {
  return (
    <g>
      {/* side port and upper housing */}
      <path d="M1200 926L1221 888 1240 884 1275 918 1290 1010 1264 997 1200 963z" fill="#4c4a4c" />
      <path d="M1200 926L1221 888 1240 884 1262 912 1262 952z" fill="#7d7779" />
      <path d="M1170 1055L1238 1020H1290L1400 1080 1420 1150 1330 1130 1150 1080z" fill="#3a393b" />
      <path d="M1258 915L1276 920 1350 1000 1462 1040 1462 1130 1400 1150 1350 1085 1300 1044 1278 1036 1262 998z" fill="url(#housing)" />
      <path d="M1300 1044C1360 1052 1384 1080 1386 1116L1360 1110 1310 1060z" fill="#303032" />
      <path d="M1323 1042C1368 1054 1387 1075 1387 1116L1415 1138 1424 1136" fill="none" stroke="#b5b5b9" strokeWidth="3" />

      {/* control valve block */}
      <path d="M1472 968L1540 975 1636 985V1060L1642 1100 1640 1150 1600 1175 1560 1208 1500 1190 1463 1130 1462 1040z" fill="#3e3e40" />
      <path d="M1466 1010L1500 985C1560 1000 1600 1040 1600 1060L1560 1150C1540 1160 1500 1150 1462 1130z" fill="url(#valve)" />
      <path d="M1570 1060L1637 995V1052L1610 1090z" fill="#242425" />
      <ellipse cx="1592" cy="1112" rx="36" ry="48" transform="rotate(12 1592 1112)" fill="#222224" />
      <path d="M1550 1064C1532 1085 1527 1110 1530 1136" fill="none" stroke="#a9a9ac" strokeWidth="3" />
      <ellipse cx="1613" cy="1140" rx="28" ry="36" fill="#29292b" />
      <ellipse cx="1614" cy="1140" rx="12" ry="14" fill="#8f8f92" />
      <path d="M1604 1148c4-14 10-18 19-14M1612 1136l6 10" stroke="#333335" strokeWidth="4" fill="none" />
      <path d="M1490 1180L1512 1140 1550 1158V1216C1530 1224 1510 1218 1495 1204z" fill="url(#housing)" />
      <path d="M1550 1158L1595 1176 1640 1150 1600 1195 1556 1216z" fill="#232324" />

      {/* hex nut and sensor */}
      <path d="M1530 955L1560 938 1605 936 1634 955 1632 985 1596 1010 1552 1004 1534 980z" fill="#5b5b5e" />
      <path d="M1530 955L1560 938 1605 936 1634 955 1634 968 1600 990 1555 985z" fill="#4a4a4d" />
      <ellipse cx="1581" cy="963" rx="24" ry="12" fill="#d7777a" />
      <ellipse cx="1581" cy="961" rx="20" ry="10" fill="#1d8b24" />
      <path d="M1572 960V932l-2-18c2-8 6-8 12-8 8 0 10 2 12 8l-1 18 3 26c-6 5-16 5-24 2z" fill="url(#sensor)" />
      <path d="M1572 934h20M1571 920h22" stroke="#9b8f08" strokeWidth="2" />

      {/* front housing behind the cover */}
      <path d="M1110 1100C1094 1120 1098 1160 1126 1196L1150 1180V1090z" fill="#59585a" />
      <path d="M1340 1085L1400 1130 1460 1130 1500 1150 1506 1172 1490 1190 1500 1220 1480 1250 1430 1300 1410 1240 1380 1150z" fill="#3d3c3f" />
      <path d="M1390 1140C1420 1115 1460 1125 1472 1160L1470 1210 1425 1240 1415 1190z" fill="url(#boss)" />
      <path d="M1462 1130C1490 1118 1506 1140 1508 1160L1488 1180z" fill="#48474a" />
      <path d="M1472 1150C1480 1180 1494 1196 1482 1228" stroke="#1c1c1d" strokeWidth="7" fill="none" />
      <path d="M1418 1270L1480 1380 1487 1388 1468 1414 1400 1456 1390 1400z" fill="#2a2a2c" />

      {/* long boss */}
      <path d="M1421 1250L1500 1212 1568 1213C1595 1225 1612 1255 1611 1290L1606 1302 1486 1374 1440 1330z" fill="url(#longBoss)" />
      <path d="M1418 1245L1421 1270C1450 1285 1484 1300 1487 1347L1481 1374C1470 1382 1460 1382 1450 1374L1418 1360z" fill="#626164" />
      <ellipse cx="1454" cy="1335" rx="17" ry="26" transform="rotate(-18 1454 1335)" fill="#2f2f31" />
    </g>
  );
}

function Cover() {
  return (
    <g>
      <path
        d="M1161 1068L1204 1050C1250 1050 1280 1052 1300 1055 1325 1072 1335 1095 1343 1113L1393 1157C1415 1175 1421 1195 1421 1215L1416 1430 1386 1462 1300 1442 1200 1385 1198 1335 1180 1325 1139 1283 1125 1257V1180L1145 1150z"
        fill="#8b8a00"
      />
      <path d="M1204 1050C1240 1052 1260 1054 1279 1055L1262 1064H1225z" fill="#77736e" />
      <path d="M1300 1055C1325 1072 1335 1095 1343 1113L1393 1157C1415 1175 1421 1195 1421 1215L1416 1430 1386 1462 1382 1203 1300 1110z" fill="url(#coverSide)" />
      <path d="M1346 1300C1350 1288 1380 1284 1384 1277V1400L1344 1390z" fill="url(#coverWall)" />
      <path d="M1215 1080C1260 1078 1290 1100 1296 1114 1262 1124 1232 1112 1215 1080z" fill="#737100" />
      <path d="M1235 1108C1262 1124 1290 1118 1298 1116 1318 1160 1312 1195 1310 1230 1330 1262 1345 1275 1346 1300 1335 1285 1300 1270 1288 1240 1274 1190 1280 1140 1235 1108z" fill="url(#coverFold)" />
      <path d="M1161 1070H1215M1228 1076C1265 1082 1282 1098 1292 1112M1306 1122L1375 1198 1384 1230" fill="none" stroke="#e6e348" strokeWidth="3" />
      <path d="M1284 1230C1292 1264 1318 1275 1330 1284L1344 1298M1350 1288L1382 1272" fill="none" stroke="#f4f262" strokeWidth="4" strokeLinecap="round" />
      <path d="M1300 1090L1376 1172" stroke="#5a5800" strokeWidth="3" />
      <path d="M1136 1166C1150 1172 1178 1170 1190 1156" fill="none" stroke="#b5b31e" strokeWidth="5" strokeLinecap="round" />
      <path d="M1298 1386H1330L1312 1400 1308 1440 1304 1442V1400z" fill="#4d4b00" />
    </g>
  );
}

function Pipe() {
  return (
    <g>
      <path d="M1148 817L1164 806 1200 822 1221 820 1225 815 1205 796 1207 779 1229 776 1314 824 1345 850 1411 880 1450 972 1300 960 1264 911 1221 879 1150 833z" fill="#003500" />
      <path d="M1148 817L1270 895 1276 916 1262 911 1221 879 1150 833z" fill="#005c00" />
      <path d="M1205 796L1225 815 1221 820 1228 812V800z" fill="#005c00" />
      <path d="M1264 933L1300 905H1414L1450 972C1462 985 1470 1000 1470 1020 1468 1042 1455 1054 1425 1054 1390 1046 1340 1030 1310 1014 1285 995 1264 985 1264 965z" fill="#005000" />
      <path d="M1266 935L1300 905H1414L1450 972C1462 985 1466 1000 1462 1015 1450 1032 1420 1038 1395 1034 1350 1024 1320 1010 1300 990z" fill="#003d00" />
      <path
        d="M1336 986V860C1338 800 1355 750 1389 708L1430 661 1439 647 1482 604 1495 583C1505 568 1520 566 1532 567 1560 572 1574 595 1571 612 1568 640 1550 645 1539 654L1504 690 1500 701 1479 719C1440 760 1420 805 1413 880L1409 976C1390 996 1350 996 1336 986z"
        fill="url(#pipe)"
      />
      <path d="M1439 647L1482 604 1495 583C1505 568 1520 566 1532 567 1560 572 1574 595 1571 612 1568 640 1550 645 1539 654L1504 690 1495 665z" fill="url(#hose)" />
      <ellipse cx="1376" cy="812" rx="19" ry="76" transform="rotate(12 1376 812)" fill="url(#shine)" />
      <path d="M1440 648C1470 646 1492 660 1502 690" fill="none" stroke="#5b9a52" strokeWidth="4" />
      <path d="M1510 576C1540 576 1560 595 1566 622" fill="none" stroke="#4a8743" strokeWidth="4" />
    </g>
  );
}

function Triad() {
  return (
    <g fontFamily="Liberation Sans, Arial, sans-serif" fontSize="36">
      <path d="M640 1532C665 1550 688 1590 687 1618 665 1632 615 1632 596 1618 596 1590 616 1550 640 1532z" fill="#a9aca8" />
      <path d="M640 1562L660 1600 640 1612 618 1598z" fill="#6f7170" />
      <path d="M600 1618L640 1592 682 1618 640 1608z" fill="#848684" />
      <path d="M640 1588V1530" stroke="#0a0a9a" strokeWidth="10" />
      <path d="M640 1518l14 12-6 10h-16l-6-10z" fill="#1a1ae6" />
      <path d="M640 1590L600 1614" stroke="#8c1010" strokeWidth="9" />
      <path d="M580 1612l8-8 14 2 2 10-11 17-11-8z" fill="#f01c1c" />
      <path d="M640 1590L684 1614" stroke="#0fb01e" strokeWidth="9" />
      <path d="M702 1610l-10-6-12 10 10 20 12-8z" fill="#0c8f1a" />
      <text x="641" y="1505" textAnchor="middle" fill="#2326d8">Z</text>
      <text x="568" y="1631" textAnchor="middle" fill="#ee3340">X</text>
      <text x="714" y="1631" textAnchor="middle" fill="#1fdc4c">Y</text>
    </g>
  );
}

function Model() {
  return (
    <Scene viewBox="490 452 1894 1290" preserveAspectRatio="xMinYMin meet">
      <defs>
        <linearGradient id="rim" x1="0" y1="0" x2="1" y2="1">
          <stop offset="0" stopColor="#4c4c4e" />
          <stop offset="0.6" stopColor="#626265" />
          <stop offset="1" stopColor="#464648" />
        </linearGradient>
        <linearGradient id="disc" x1="0" y1="0" x2="0" y2="1">
          <stop offset="0" stopColor="#444446" />
          <stop offset="1" stopColor="#3a3a3c" />
        </linearGradient>
        <linearGradient id="housing">
          <stop offset="0" stopColor="#5f5d60" />
          <stop offset="0.6" stopColor="#6d6c6f" />
          <stop offset="1" stopColor="#2f2f31" />
        </linearGradient>
        <linearGradient id="valve" x1="0.6" y1="0" x2="0.3" y2="1">
          <stop offset="0" stopColor="#424244" />
          <stop offset="0.55" stopColor="#858588" />
          <stop offset="1" stopColor="#434345" />
        </linearGradient>
        <linearGradient id="boss" x1="0" y1="0" x2="0.2" y2="1">
          <stop offset="0" stopColor="#3a3a3c" />
          <stop offset="0.6" stopColor="#545356" />
          <stop offset="1" stopColor="#1f1f20" />
        </linearGradient>
        <linearGradient id="longBoss" x1="0.3" y1="0" x2="0.6" y2="1">
          <stop offset="0" stopColor="#3b3b3d" />
          <stop offset="0.5" stopColor="#474749" />
          <stop offset="1" stopColor="#202021" />
        </linearGradient>
        <linearGradient id="coverSide">
          <stop offset="0" stopColor="#8b8a00" />
          <stop offset="0.65" stopColor="#7a7800" />
          <stop offset="0.8" stopColor="#454400" />
          <stop offset="1" stopColor="#5f5e00" />
        </linearGradient>
        <linearGradient id="coverWall" x1="0" y1="0" x2="0" y2="1">
          <stop offset="0" stopColor="#a19f10" />
          <stop offset="0.25" stopColor="#6f6d00" />
          <stop offset="0.6" stopColor="#5a5900" />
          <stop offset="1" stopColor="#858300" />
        </linearGradient>
        <linearGradient id="coverFold">
          <stop offset="0" stopColor="#a5a310" />
          <stop offset="0.45" stopColor="#f2f07c" />
          <stop offset="0.7" stopColor="#94920a" />
          <stop offset="1" stopColor="#5e5c00" />
        </linearGradient>
        <linearGradient id="pipe">
          <stop offset="0" stopColor="#004a00" />
          <stop offset="0.25" stopColor="#005e00" />
          <stop offset="0.5" stopColor="#003c00" />
          <stop offset="1" stopColor="#001d00" />
        </linearGradient>
        <linearGradient id="hose" x1="0.2" y1="0.2" x2="0.8" y2="0.8">
          <stop offset="0" stopColor="#003f00" />
          <stop offset="0.6" stopColor="#002600" />
          <stop offset="1" stopColor="#001200" />
        </linearGradient>
        <radialGradient id="shine">
          <stop offset="0" stopColor="#8ae486" />
          <stop offset="0.5" stopColor="#3f9a3e" stopOpacity="0.8" />
          <stop offset="1" stopColor="#005e00" stopOpacity="0" />
        </radialGradient>
        <linearGradient id="sensor">
          <stop offset="0" stopColor="#b5aa00" />
          <stop offset="0.5" stopColor="#ffff2a" />
          <stop offset="1" stopColor="#a59a00" />
        </linearGradient>
        <linearGradient id="washer" x1="0.2" y1="0" x2="0.8" y2="1">
          <stop offset="0" stopColor="#3c3c40" />
          <stop offset="0.4" stopColor="#c9c8d2" />
          <stop offset="0.7" stopColor="#77767f" />
          <stop offset="1" stopColor="#222224" />
        </linearGradient>
        <linearGradient id="washerTop">
          <stop offset="0" stopColor="#4a474c" />
          <stop offset="0.45" stopColor="#d2d0d8" />
          <stop offset="1" stopColor="#3a383c" />
        </linearGradient>
      </defs>
      <Pulley />
      <PumpBody />
      <Pipe />
      <TopBolt x={1300} y={930} />
      <TopBolt x={1427} y={1001} />
      <Cover />
      <path d="M1136 1290l10-5 36 38 16 8 4 16-8 14-30-4z" fill="#2b2a2d" />
      <path d="M1176 1328l20 4 6 16-6 12-14-2z" fill="#6b6a72" />
      <path d="M1124 1318l14-18 22 6 18 24 2 28-14 6-24-8z" fill="#151515" />
      <path d="M1127 1324l12-12 20 8 9 20-2 24-12 2-22-14z" fill="#3a3a3e" />
      <path d="M1148 1314c8 4 12 8 14 16" fill="none" stroke="#d5d5dc" strokeWidth="2" />
      <SideBolt x={1158} y={1115} />
      <SideBolt x={1343} y={1219} />
      <SideBolt x={1343} y={1432} />
      <Triad />
    </Scene>
  );
}

/* ---------- data ---------- */

const TABS = [
  ['보기(V)', 142], ['편집(E)', 160], ['그리기(D)', 148], ['수정(M)', 154], ['조립', 114],
  ['분석(A)', 158], ['치수(I)', 138], ['축(A)', 136], ['단면(S)', 142], ['도구(T)', 164],
  ['설정(R)', 140], ['MCP', 134], ['용접(W)', 146], ['시뮬레이션', 154],
];

const ZOOM_TOOLS = [
  ['줌 확대', ZoomIn], ['줌 축소', ZoomOut], ['영역확대', ZoomArea],
  ['동적 줌', ZoomDynamic], ['전체표시', ZoomFit], ['도형 줌', ZoomShape],
];

const SNAP_TOOLS = [SnapPoint, SnapEnd, SnapMid, SnapCurve, SnapCenter, SnapQuad, SnapCross];
const PICK_TOOLS = [PickPoint, PickCurve, PickFace, PickFan, SolidCube, PickBody, PickMeasure, PickAxis];

const LEAVES = [
  { label: 'Geometry', icon: GraphIcon },
  { label: 'Section', icon: SectionIcon },
  { label: 'Axis', icon: AxisIcon },
  { label: 'PMI', icon: PmiIcon, closed: true },
  { label: 'Mate', icon: MateIcon },
  { label: 'Models', icon: GraphIcon, closed: true },
];

function Commands({ items, width }) {
  return (
    <Column $width={width}>
      {items.map(([label, Picture, on]) => (
        <Command key={label} $on={on}>
          <Picture />
          {label}
        </Command>
      ))}
    </Column>
  );
}

function FaceColumn({ faces, width }) {
  return (
    <Column $width={width}>
      {faces.map(([face, label]) => (
        <Command key={face} aria-label={label || face}>
          <FaceCube face={face} />
          {label}
        </Command>
      ))}
    </Column>
  );
}

function RibbonBar() {
  const [clip, setClip] = useState(false);
  const [axes, setAxes] = useState(false);

  return (
    <Ribbon>
      <Group $width={358} $start={20}>
        <GroupBody>
          <Commands items={ZOOM_TOOLS.slice(0, 3)} width={163} />
          <Commands items={ZOOM_TOOLS.slice(3)} />
        </GroupBody>
        <GroupTitle>줌</GroupTitle>
      </Group>

      <Group $width={616} $start={10}>
        <GroupBody>
          <Commands
            width={152}
            items={[['뷰 회전', RotateView], ['뷰 이동', MoveView], ['이전 뷰', BackView]]}
          />
          <Commands
            width={171}
            items={[
              ['뷰 저장...', () => <Stamp color="#8cc63f" edge="#4e8a1c" up />],
              ['뷰 호출...', () => <Stamp color="#4a90d0" edge="#25629c" />],
            ]}
          />
          <Rule $after={14} />
          <FaceColumn width={138} faces={[['front', '앞면'], ['left', '왼쪽면'], ['top', '윗면']]} />
          <FaceColumn width={57} faces={[['back'], ['right'], ['bottom']]} />
          <Rule $after={12} />
          <Column>
            <Command aria-label="isometric"><Diamond /></Command>
            <Command aria-label="normal view"><EyeAxis /></Command>
            <Command aria-label="target view"><TargetAxis /></Command>
          </Column>
        </GroupBody>
        <GroupTitle>뷰</GroupTitle>
      </Group>

      <Group $width={648} $start={12} $warm>
        <GroupBody>
          <Commands
            width={173}
            items={[['실선 표시', WireCube], ['은선 제거', HiddenCube], ['음영 처리', ShadedCube, true]]}
          />
          <Commands width={264} items={[['모서리 표시 음영', EdgeCube]]} />
          <Rule $after={15} />
          <Commands items={[['평행 투영', ParallelIcon, true], ['원근 투영', PerspectiveIcon]]} />
        </GroupBody>
        <GroupTitle>음영 모드</GroupTitle>
      </Group>

      <Group $width={492} $start={10}>
        <GroupBody>
          <Commands
            width={262}
            items={[
              ['색상 On/Off', ColorIcon],
              ['도형 숨기기', () => <HideIcon twin />],
              ['도형 숨기기 반전', HideIcon],
            ]}
          />
          <Column>
            <Command><LayersIcon />투명도 설정</Command>
            <Command><LayersIcon />투명도 해제</Command>
            <CheckCommand>
              <CheckBox type="checkbox" checked={axes} onChange={e => setAxes(e.target.checked)} />
              기준 축 표시
            </CheckCommand>
          </Column>
        </GroupBody>
        <GroupTitle>가시성</GroupTitle>
      </Group>

      <Group $width={196} $start={10}>
        <GroupBody>
          <Column>
            <CheckCommand>
              <CheckBox type="checkbox" checked={clip} onChange={e => setClip(e.target.checked)} />
              클리핑 뷰
            </CheckCommand>
            <Command><OptionsIcon />뷰 옵션</Command>
          </Column>
        </GroupBody>
        <GroupTitle>기타</GroupTitle>
      </Group>
    </Ribbon>
  );
}

function QuickBar() {
  return (
    <ToolBar>
      <ToolButton aria-label="new"><NewIcon /></ToolButton>
      <ToolButton aria-label="open"><OpenIcon /></ToolButton>
      <ToolButton aria-label="save"><SaveIcon /></ToolButton>
      <ToolRule $space={7} />
      <ToolButton $narrow aria-label="undo"><UndoIcon /></ToolButton>
      <ToolButton $narrow aria-label="undo list"><DropIcon /></ToolButton>
      <ToolButton $narrow aria-label="redo"><RedoIcon /></ToolButton>
      <ToolButton $narrow aria-label="redo list"><DropIcon /></ToolButton>
      <ToolRule $space={2} />
      {[ZoomIn, ZoomOut, ZoomArea, ZoomDynamic, ZoomFit, ZoomShape].map((Picture, i) => (
        <ToolButton key={i}><Picture /></ToolButton>
      ))}
      <ToolRule />
      {['front', 'back', 'left', 'right', 'top', 'bottom'].map(face => (
        <ToolButton key={face} aria-label={face}><FaceCube face={face} /></ToolButton>
      ))}
      <ToolButton aria-label="isometric"><Diamond /></ToolButton>
      <ToolButton aria-label="normal view"><EyeAxis /></ToolButton>
      <ToolRule $space={6} />
      <ToolButton aria-label="wireframe"><WireCube /></ToolButton>
      <ToolButton aria-label="hidden line"><HiddenCube /></ToolButton>
      <ToolButton $on aria-label="shaded"><ShadedCube /></ToolButton>
      <ToolButton aria-label="shaded with edges"><EdgeCube /></ToolButton>
      <ToolRule />
      {SNAP_TOOLS.map((Picture, i) => (
        <ToolButton key={i} $on><Picture /></ToolButton>
      ))}
      <ToolButton><SnapFree /></ToolButton>
      <ToolButton><SnapDistance /></ToolButton>
      <ToolRule $space={6} />
      {PICK_TOOLS.map((Picture, i) => (
        <ToolButton key={i} $on><Picture /></ToolButton>
      ))}
      <ToolButton aria-label="more">
        <Icon size={24}><path d="M6 6h12v3H6zM5 13h14l-7 7z" fill="#4f5d70" /></Icon>
      </ToolButton>
    </ToolBar>
  );
}

function ModelExplorer() {
  return (
    <Explorer>
      <ExplorerHead>
        <ExplorerTitle>모델 탐색기</ExplorerTitle>
        <GlyphButton aria-label="pin">
          <Icon size={22}><path d="M7 2h10v11H7zM3 14h18M12 14v9M15 2v11" stroke="#66758c" strokeWidth="2" /></Icon>
        </GlyphButton>
        <GlyphButton aria-label="close panel">
          <Icon size={22}><path d="M3 3l18 18M21 3L3 21" stroke="#66758c" strokeWidth="2.600" /></Icon>
        </GlyphButton>
      </ExplorerHead>
      <TreePanel>
        <Tree>
          <li>
            <Root>
              <Expander $open aria-label="collapse" />
              <FolderIcon />
              C:\Documents and Setting...
            </Root>
            <Branch $count={LEAVES.length}>
              {LEAVES.map(({ label, icon: Picture, closed }) => (
                <Leaf key={label}>
                  {closed && <Expander $nested aria-label={`expand ${label}`} />}
                  <Twig $short={closed} />
                  <Picture />
                  {label}
                </Leaf>
              ))}
            </Branch>
          </li>
        </Tree>
        <Company>
          <svg width="228" height="26" viewBox="0 0 228 26" aria-hidden="true">
            <path d="M0 3C60 34 168 34 228 3 168 26 60 26 0 3z" fill="#9ba1a8" />
            <path d="M106 4c0-4 16-4 16 0s-4 8-8 11c-4-3-8-7-8-11z" fill="#0f78b8" />
          </svg>
          <CompanyMark>JIN</CompanyMark>
          <CompanySub>JINYOUNG</CompanySub>
          <svg width="84" height="9" viewBox="0 0 84 9" aria-hidden="true">
            <path d="M3 5h6M13 6h3M20 5h4M29 5h7M40 6h3M46 5h4M53 5h7M67 5h6M75 5h6" stroke="#222" strokeWidth="4" />
          </svg>
          <CompanyName>(주)진영정보</CompanyName>
          <CompanyLink href="#home">www.modview.co</CompanyLink>
        </Company>
      </TreePanel>
    </Explorer>
  );
}

function App() {
  return (
    <Window>
      <GlobalStyle />
      <TitleBar>
        <AppLogo />
        <Title>MODView 2012 - 1_Pump Assy_kasco.CATPart</Title>
        <WindowButtons>
          <GlyphButton aria-label="minimize">
            <svg width="30" height="30" viewBox="0 0 30 30"><rect x="3" y="14" width="24" height="10" rx="2" fill="#f5f7fa" stroke="#5a6270" strokeWidth="2" /></svg>
          </GlyphButton>
          <GlyphButton aria-label="restore">
            <svg width="30" height="30" viewBox="0 0 30 30"><rect x="3" y="4" width="24" height="21" fill="#f5f7fa" stroke="#5a6270" strokeWidth="2" /><rect x="11" y="11" width="8" height="7" fill="#f5f7fa" stroke="#5a6270" strokeWidth="3" /></svg>
          </GlyphButton>
          <GlyphButton aria-label="close">
            <svg width="30" height="30" viewBox="0 0 30 30"><path d="M3 4h7l5 6 5-6h7l-8 11 8 11h-7l-5-6-5 6H3l8-11z" fill="#f5f7fa" stroke="#5a6270" strokeWidth="2" /></svg>
          </GlyphButton>
        </WindowButtons>
      </TitleBar>
      <TabBar>
        <FileTab>File</FileTab>
        {TABS.map(([label, width], i) => (
          <MenuTab key={label} $width={width} $active={i === 0}>{label}</MenuTab>
        ))}
        <TabBarEnd>
          <GlyphButton aria-label="collapse ribbon">
            <svg width="24" height="20" viewBox="0 0 24 20"><path d="M2 17V11L12 2l10 9v6h-6l-4-5-4 5z" fill="#f5f7fa" stroke="#5a6270" strokeWidth="2" /></svg>
          </GlyphButton>
          <GlyphButton aria-label="help">
            <svg width="36" height="36" viewBox="0 0 36 36">
              <circle cx="18" cy="18" r="15" fill="#2a62d0" stroke="#8fb0e2" strokeWidth="3" />
              <circle cx="18" cy="18" r="12" fill="none" stroke="#cfe0f8" strokeWidth="2" />
              <text x="18" y="26" textAnchor="middle" fontFamily="Liberation Sans, sans-serif" fontWeight="700" fontSize="23" fill="#fff">?</text>
            </svg>
          </GlyphButton>
        </TabBarEnd>
      </TabBar>
      <RibbonBar />
      <QuickBar />
      <Workspace>
        <ModelExplorer />
        <Documents>
          <DocBar>
            <DocScroll aria-label="previous tab">
              <Icon size={24}><path d="M17 3v18L7 12z" stroke="#6f7d92" strokeWidth="1.800" /></Icon>
            </DocScroll>
            <DocSlant width="54" height="53" viewBox="0 0 54 53">
              <path d="M8 53L46 4c2-2 4-3 8-3v52z" fill="#e4eefb" />
              <path d="M8 53L46 4c2-2 4-3 8-3" fill="none" stroke="#8b9db8" strokeWidth="2" />
            </DocSlant>
            <DocTab>
              <DocIcon />
              1_Pump Assy_kasco.CATPart(opengl)
            </DocTab>
            <DocBarEnd>
              <GlyphButton aria-label="next tab">
                <Icon size={24}><path d="M8 3v18l9-9z" stroke="#6f7d92" strokeWidth="1.800" /></Icon>
              </GlyphButton>
              <GlyphButton aria-label="close document">
                <Icon size={22}><path d="M3 3l18 18M21 3L3 21" stroke="#56647a" strokeWidth="2.600" /></Icon>
              </GlyphButton>
            </DocBarEnd>
          </DocBar>
          <Viewport>
            <Model />
          </Viewport>
        </Documents>
      </Workspace>
      <StatusBar>
        Ready
        <Coordinates>
          X=8,47, Y=-168,87, Z=139,27
          <Icon size={26}>
            <path d="M18 2h4v4h-4zM10 10h4v4h-4zM18 10h4v4h-4zM2 18h4v4H2zM10 18h4v4h-4zM18 18h4v4h-4z" fill="#8698b4" />
          </Icon>
        </Coordinates>
      </StatusBar>
      <Pointer width="34" height="54" viewBox="0 0 34 54">
        <path d="M2 2v38l8-8 9 19 6-3-9-18h13z" fill="#fff" stroke="#222" strokeWidth="2" />
      </Pointer>
    </Window>
  );
}

export default App;
